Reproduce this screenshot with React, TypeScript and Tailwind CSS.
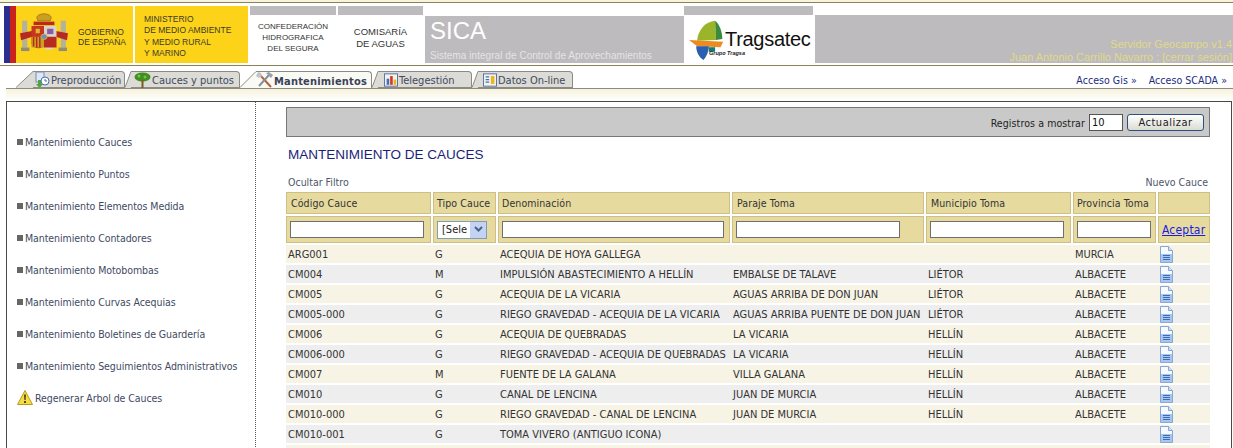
import React from 'react';

const COLS = 'grid grid-cols-[145px_63px_232px_192px_145px_83px_52px] gap-x-[2px]';

const menu = [
  'Mantenimiento Cauces',
  'Mantenimiento Puntos',
  'Mantenimiento Elementos Medida',
  'Mantenimiento Contadores',
  'Mantenimiento Motobombas',
  'Mantenimiento Curvas Acequias',
  'Mantenimiento Boletines de Guardería',
  'Mantenimiento Seguimientos Administrativos',
];

const rows = [
  ['ARG001', 'G', 'ACEQUIA DE HOYA GALLEGA', '', '', 'MURCIA'],
  ['CM004', 'M', 'IMPULSIÓN ABASTECIMIENTO A HELLÍN', 'EMBALSE DE TALAVE', 'LIÉTOR', 'ALBACETE'],
  ['CM005', 'G', 'ACEQUIA DE LA VICARIA', 'AGUAS ARRIBA DE DON JUAN', 'LIÉTOR', 'ALBACETE'],
  ['CM005-000', 'G', 'RIEGO GRAVEDAD - ACEQUIA DE LA VICARIA', 'AGUAS ARRIBA PUENTE DE DON JUAN', 'LIÉTOR', 'ALBACETE'],
  ['CM006', 'G', 'ACEQUIA DE QUEBRADAS', 'LA VICARIA', 'HELLÍN', 'ALBACETE'],
  ['CM006-000', 'G', 'RIEGO GRAVEDAD - ACEQUIA DE QUEBRADAS', 'LA VICARIA', 'HELLÍN', 'ALBACETE'],
  ['CM007', 'M', 'FUENTE DE LA GALANA', 'VILLA GALANA', 'HELLÍN', 'ALBACETE'],
  ['CM010', 'G', 'CANAL DE LENCINA', 'JUAN DE MURCIA', 'HELLÍN', 'ALBACETE'],
  ['CM010-000', 'G', 'RIEGO GRAVEDAD - CANAL DE LENCINA', 'JUAN DE MURCIA', 'HELLÍN', 'ALBACETE'],
  ['CM010-001', 'G', 'TOMA VIVERO (ANTIGUO ICONA)', '', '', ''],
];

const DocIcon = () => (
  <svg width="13" height="17" viewBox="0 0 13 17">
    <path d="M.5.5h8l4 4v12H.5z" fill="#f6f9fe" stroke="#86a6d4" />
    <path d="M8.500.5v4h4" fill="#d6e4f7" stroke="#86a6d4" />
    <rect x="1" y="8" width="11" height="8" fill="#aac6ee" />
    <path d="M3 9.500h7M3 11.500h7M3 13.500h7" stroke="#3a6dbb" />
  </svg>
);

const Shield = () => (
  <svg width="48" height="50" viewBox="0 0 46 56" preserveAspectRatio="none" className="absolute left-[16px] top-[4px]">
    <path d="M16 8c2-5 12-5 14 0l-1 4H17z" fill="#c9a021" stroke="#8a5a10" strokeWidth=".6" />
    <path d="M13 13h20v4H13z" fill="#b82a20" />
    <rect x="2" y="12" width="5" height="30" fill="#b5b29a" />
    <rect x="39" y="12" width="5" height="30" fill="#b5b29a" />
    <path d="M0 26l14-3v6L1 34zM46 26l-14-3v6l13 5z" fill="#b82a20" />
    <path d="M11 18h12v22c-2 4-10 4-12-2z" fill="#c9341f" />
    <path d="M23 18h12v20c-2 7-10 8-12 4z" fill="#d8d4c8" />
    <rect x="23" y="30" width="12" height="12" fill="#b82a20" />
    <rect x="11" y="30" width="12" height="12" fill="#c9a021" />
    <path d="M13 30v11M16 30v12M19 30v12" stroke="#b82a20" strokeWidth="1.400" />
    <path d="M15 21l4 0 0 5-4 0z" fill="#d9b92f" />
    <path d="M26 21h6v6h-6z" fill="#8a5aa8" />
    <circle cx="23" cy="30" r="3" fill="#6a8fc0" stroke="#d9b92f" strokeWidth=".8" />
    <rect x="1" y="42" width="8" height="4" fill="#8f8e74" />
    <rect x="37" y="42" width="8" height="4" fill="#8f8e74" />
  </svg>
);

const TragsatecLogo = () => (
  <svg width="36" height="42" viewBox="0 0 40 46" preserveAspectRatio="none" className="shrink-0">
    <path d="M9 25C10 13 18 4 29 3l1 21z" fill="#9bb52a" />
    <path d="M29 3c5 4 8 12 8 20l-7 1z" fill="#3c8a3c" />
    <path d="M0 24l38 2-3 6-26-1z" fill="#ee8a22" />
    <path d="M8 31h14c0 6-3 12-6 15C11 43 8 37 8 31z" fill="#2a5eae" />
    <rect x="22" y="32" width="7" height="5" fill="#127a78" />
  </svg>
);

const Cell = ({ children, className = '' }: { children?: React.ReactNode; className?: string }) => (
  <div className={`bg-[#e6da9f] border border-[#cfbf82] flex items-center ${className}`}>{children}</div>
);

const FilterInput = ({ width }: { width: string }) => (
  <input className={`${width} h-[17px] bg-white border border-[#6f6f6f] ml-[3px]`} />
);

const Tab = ({
  label,
  icon,
  active = false,
  slant,
  width,
  iconBox = 'w-[17px]',
}: {
  label: string;
  icon: React.ReactNode;
  active?: boolean;
  slant: number;
  width: string;
  iconBox?: string;
}) => (
  <div className={`flex items-stretch h-[17px] ${width}`}>
    <svg width={slant} height="17" viewBox={`0 0 ${slant} 17`} className="shrink-0">
      <path d={`M0 17L${slant} 0V17z`} fill={active ? '#fafaf4' : '#dcdbd5'} />
      <path d={`M0 16.500L${slant} .5`} stroke="#8b8b83" fill="none" />
    </svg>
    <div
      className={`flex-1 flex items-center gap-[1px] border-t border-r border-[#8b8b83] rounded-tr-[4px] ${
        active ? 'bg-[#fafaf4] font-bold text-[#3a4257] tracking-[0.2px]' : 'bg-[#dcdbd5] border-b text-[#3f4a5f]'
      }`}
    >
      <span className={`shrink-0 ${iconBox} h-[15px] flex items-center justify-end`}>{icon}</span>
      <span className="whitespace-nowrap pt-[2px]">{label}</span>
    </div>
  </div>
);

const ClockIcon = () => (
  <svg width="17" height="16" viewBox="0 0 17 16">
    <rect x="3" y="0" width="8" height="10" fill="#dfe7f5" stroke="#6f8fc0" />
    <path d="M5 8v4H3l3.500 4L10 12H8V8z" fill="#4fa63a" />
    <circle cx="12" cy="9" r="4" fill="#fff" stroke="#3f6fb5" />
    <path d="M12 7v2h2" stroke="#3f6fb5" fill="none" />
  </svg>
);

const TreeIcon = () => (
  <svg width="17" height="16" viewBox="0 0 17 16">
    <ellipse cx="8.500" cy="5" rx="8" ry="4.500" fill="#3f8f22" />
    <circle cx="5" cy="4" r="1.500" fill="#7cc04a" />
    <circle cx="11" cy="5" r="1.500" fill="#7cc04a" />
    <path d="M7.500 8h2v8h-2z" fill="#7a5a20" />
  </svg>
);

const ToolsIcon = () => (
  <svg width="17" height="16" viewBox="0 0 17 16">
    <path d="M4 3l11 12" stroke="#b5623a" strokeWidth="2" />
    <path d="M13 3L3 14" stroke="#8a8f98" strokeWidth="2" />
    <path d="M10 1l3-1 4 3-2 3-2-2z" fill="#9aa0a8" />
    <path d="M0 4l2-4 3 1 1 3-3 2z" fill="#c0c4cc" />
  </svg>
);

const ChartIcon = () => (
  <svg width="14" height="14" viewBox="0 0 16 15">
    <rect x=".5" y=".5" width="15" height="14" fill="#f4f3e8" stroke="#4a66a8" />
    <rect x="3" y="6" width="3" height="7" fill="#3f6fc5" />
    <rect x="7" y="3" width="3" height="10" fill="#d9362a" />
    <rect x="11" y="7" width="3" height="6" fill="#e8b820" />
  </svg>
);

const DataIcon = () => (
  <svg width="14" height="14" viewBox="0 0 16 15">
    <rect x=".5" y=".5" width="15" height="14" fill="#f4f3e8" stroke="#4a66a8" />
    <rect x="9" y="3" width="4" height="9" fill="#e8b820" />
    <path d="M3 4h4M3 7h4M3 10h4" stroke="#3f6fc5" strokeWidth="1.500" />
  </svg>
);

const WarningIcon = () => (
  <svg width="16" height="15" viewBox="0 0 16 15" className="shrink-0">
    <path d="M8 .5L15.500 14.500H.5z" fill="#f6dc3c" stroke="#b89a20" strokeLinejoin="round" />
    <path d="M7.200 4.500h1.600l-.3 5.500h-1zM7.200 11h1.600v2H7.200z" fill="#222" />
  </svg>
);

export default function App() {
  return (
    <div className="relative w-[1233px] h-[448px] overflow-hidden bg-white font-['DejaVu_Sans_Condensed','DejaVu_Sans',sans-serif] [font-stretch:condensed] text-[10.500px] leading-none text-[#3f4a5f]">
      {/* franja superior */}
      <div className="h-[3px] bg-[#f7f3dc] border-b border-[#8a8356]" />

      {/* cabecera */}
      <div className="flex h-[57px] mt-[3px] pl-[4px] font-['Liberation_Sans',sans-serif] [font-stretch:normal]">
        <div className="w-[129px] flex items-center bg-[#fdd31a] relative">
          <div className="absolute left-0 top-0 bottom-0 w-[6px] bg-[#2a2f8f]" />
          <div className="absolute left-[6px] top-0 bottom-0 w-[6px] bg-[#c8241c]" />
          <Shield />
          <div className="ml-[74px] text-[8.500px] leading-[10px] text-[#3a3a28] whitespace-nowrap mt-[5px]">
            GOBIERNO
            <br />
            DE ESPAÑA
          </div>
        </div>
        <div className="w-[113px] ml-[2px] bg-[#fdd31a] pl-[9px] pt-[8px] text-[8.500px] leading-[11.300px] text-[#3a3a28] whitespace-nowrap">
          MINISTERIO
          <br />
          DE MEDIO AMBIENTE
          <br />
          Y MEDIO RURAL
          <br />Y MARINO
        </div>
        <div className="w-[86px] ml-[2px]">
          <div className="h-[9px] bg-[#bdbbbd]" />
          <div className="text-center text-[8px] leading-[11px] pt-[6px] text-[#333]">
            CONFEDERACIÓN
            <br />
            HIDROGRAFICA
            <br />
            DEL SEGURA
          </div>
        </div>
        <div className="w-[85px] ml-[2px]">
          <div className="h-[9px] bg-[#bdbbbd]" />
          <div className="text-center text-[9.500px] leading-[12px] pt-[11px] text-[#333]">
            COMISARÍA
            <br />
            DE AGUAS
          </div>
        </div>
        <div className="w-[259px] pt-[10px] ml-[2px]">
          <div className="h-[47px] bg-[#bdbbbd] text-white pl-[5px] pt-[2px]">
            <div className="text-[24px] leading-[26px]">SICA</div>
            <div className="text-[10px] leading-[12px] mt-[6px] text-[#e4e4e4] whitespace-nowrap tracking-[0.05px]">
              Sistema integral de Control de Aprovechamientos
            </div>
          </div>
        </div>
        <div className="w-[129px]">
          <div className="h-[9px] bg-[#bdbbbd]" />
          <div className="relative flex items-start pl-[5px] pt-[3px]">
            <TragsatecLogo />
            <div className="text-[20px] leading-[24px] text-[#111] tracking-[-0.3px] mt-[9px]">Tragsatec</div>
            <div className="absolute left-[25px] top-[36px] text-[5.500px] italic font-bold text-[#222]">Grupo Tragsa</div>
          </div>
        </div>
        <div className="flex-1 ml-[2px] mt-[9px] bg-[#bdbbbd] flex flex-col justify-end items-end pr-[1px] text-[11px] leading-[13px] text-[#e0d98a] whitespace-nowrap">
          <div className="translate-y-[1px]">Servidor Geocampo v1.4</div>
          <div className="translate-y-[1px]">Juan Antonio Carrillo Navarro : [cerrar sesión]</div>
        </div>
      </div>

      <div className="h-[1px] mt-[2px] bg-[#8a8356]" />

      {/* pestañas */}
      <div className="mt-[5px] ml-[6px] flex items-end h-[17px] relative text-[11px]">
        <div className="w-[10px]" />
        <Tab label="Preproducción" icon={<ClockIcon />} slant={17} width="w-[109px]" />
        <Tab label="Cauces y puntos" icon={<TreeIcon />} slant={6} width="w-[115px]" iconBox="w-[20px]" />
        <Tab label="Mantenimientos" icon={<ToolsIcon />} active slant={16} width="w-[132px]" />
        <Tab label="Telegestión" icon={<ChartIcon />} slant={6} width="w-[100px]" iconBox="w-[20px]" />
        <Tab label="Datos On-line" icon={<DataIcon />} slant={6} width="w-[101px]" iconBox="w-[19px]" />
        <div className="ml-auto mr-[6px] self-center flex gap-[12px] text-[#1b2c80] whitespace-nowrap pt-[1px] text-[10.500px] tracking-[0.05px]">
          <span>Acceso Gis »</span>
          <span>Acceso SCADA »</span>
        </div>
      </div>
      <div className="h-[13px] ml-[6px] border-t border-[#8b8b83] bg-gradient-to-b from-[#f7f2dc] to-white" />

      {/* cuerpo */}
      <div className="ml-[6px] mr-[1px] h-[400px] border border-b-0 border-[#4a4a4a] flex">
        <aside className="w-[249px] h-full border-r border-dotted border-[#555] pt-[34px] pl-[10px] shrink-0 tracking-[-0.07px]">
          {menu.map((m) => (
            <div key={m} className="h-[32px] flex items-start gap-[2px] whitespace-nowrap">
              <span className="w-[6px] h-[6px] mt-[3px] bg-[#666] shrink-0" />
              <span className="pt-[1px]">{m}</span>
            </div>
          ))}
          <div className="flex items-start gap-[2px] -mt-[2px] whitespace-nowrap">
            <WarningIcon />
            <span className="mt-[3px]">Regenerar Arbol de Cauces</span>
          </div>
        </aside>

        <main className="pl-[30px] pt-[5px] w-[954px] shrink-0">
          <div className="h-[30px] bg-[#c9c9c9] border border-[#777] flex items-center justify-end pr-[5px] text-[#222]">
            <span className="mr-[4px] text-[10.500px] tracking-[0.1px] pt-[2px]">Registros a mostrar</span>
            <input
              readOnly
              value="10"
              className="w-[34px] h-[17px] bg-white border border-[#555] px-[2px] text-[11px] text-[#111] mr-[4px]"
            />
            <button className="w-[77px] h-[17px] rounded-[3px] border border-[#2f4f7f] bg-gradient-to-b from-white to-[#dcdcd4] text-[#222] text-[11px] tracking-[0.5px]">
              Actualizar
            </button>
          </div>

          <h1 className="mt-[10px] ml-[2px] text-[13.500px] leading-[16px] font-normal font-['Liberation_Sans',sans-serif] [font-stretch:normal] text-[#1b1f7a]">
            MANTENIMIENTO DE CAUCES
          </h1>

          <div className="mt-[12px] h-[14px] flex justify-between items-center pl-[2px] pr-[2px] text-[#4c566b] pt-[1px]">
            <span>Ocultar Filtro</span>
            <span>Nuevo Cauce</span>
          </div>

          <div className={`${COLS} mt-[3px] h-[22px] text-[#333] tracking-[0.1px]`}>
            <Cell className="pl-[4px]">Código Cauce</Cell>
            <Cell className="pl-[3px] whitespace-nowrap">Tipo Cauce</Cell>
            <Cell className="pl-[3px]">Denominación</Cell>
            <Cell className="pl-[4px]">Paraje Toma</Cell>
            <Cell className="pl-[4px]">Municipio Toma</Cell>
            <Cell className="pl-[3px] whitespace-nowrap">Provincia Toma</Cell>
            <Cell />
          </div>

          <div className={`${COLS} mt-[2px] h-[27px]`}>
            <Cell>
              <FilterInput width="w-[134px]" />
            </Cell>
            <Cell>
              <div className="ml-[3px] w-[50px] h-[18px] bg-white border border-[#7f9db9] flex items-center justify-between text-[#222] text-[11px] pl-[4px]">
                <span className="w-[29px] whitespace-nowrap overflow-hidden">[Sele</span>
                <span className="w-[16px] h-[16px] bg-[#c3d3f5] flex items-center justify-center">
                  <svg width="9" height="7" viewBox="0 0 9 7">
                    <path d="M1 1l3.500 3.500L8 1" stroke="#4d6185" strokeWidth="2" fill="none" />
                  </svg>
                </span>
              </div>
            </Cell>
            <Cell>
              <FilterInput width="w-[222px]" />
            </Cell>
            <Cell>
              <FilterInput width="w-[164px]" />
            </Cell>
            <Cell>
              <FilterInput width="w-[134px]" />
            </Cell>
            <Cell>
              <FilterInput width="w-[74px]" />
            </Cell>
            <Cell className="pl-[3px]">
              <a href="#" className="text-[#1a1ae0] underline text-[12px] tracking-[0.2px]">
                Aceptar
              </a>
            </Cell>
          </div>

          <div className="mt-[2px] flex flex-col gap-y-[2px] text-[#333] text-[11px]">
            {rows.map((r, i) => (
              <div key={r[0]} className={`${COLS} h-[18px] items-center ${i % 2 === 0 ? 'bg-[#f7f4e6]' : 'bg-[#eeeeee]'}`}>
                <span className="pl-[2px] whitespace-nowrap">{r[0]}</span>
                <span className="pl-[2px]">{r[1]}</span>
                <span className="pl-[2px] whitespace-nowrap">{r[2]}</span>
                <span className="pl-[1px] whitespace-nowrap">{r[3]}</span>
                <span className="pl-[2px] whitespace-nowrap">{r[4]}</span>
                <span className="pl-[2px] whitespace-nowrap">{r[5]}</span>
                <span className="pl-[2px] flex items-center">
                  <DocIcon />
                </span>
              </div>
            ))}
            <div className="h-[4px] bg-[#f7f4e6]" />
          </div>
        </main>
      </div>
    </div>
  );
}
